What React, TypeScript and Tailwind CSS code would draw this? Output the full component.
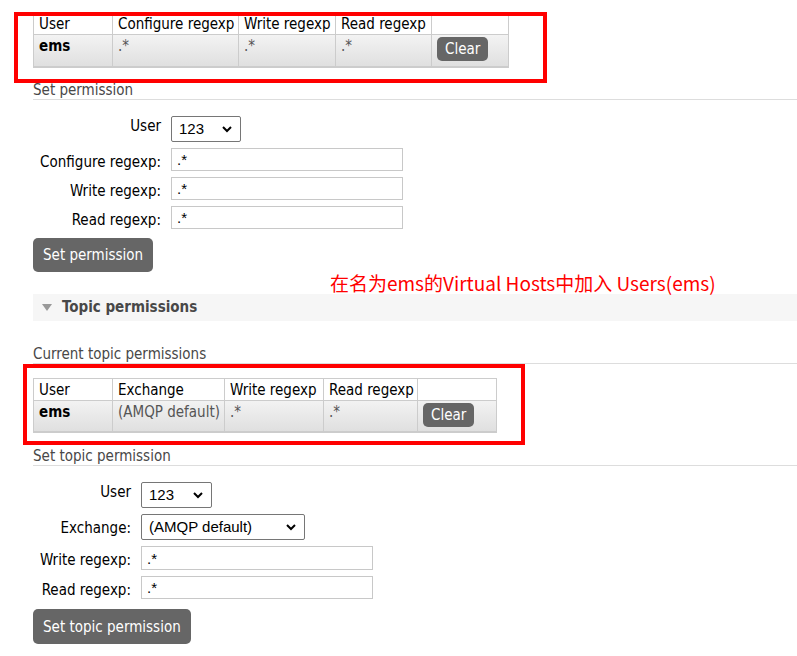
import React from "react";

const ui = "font-['DejaVu_Sans_Condensed','Noto_Sans',sans-serif] text-[15px] leading-[18px]";
const field = "font-['Liberation_Sans',Arial,sans-serif] text-[15px]";

const Chevron = () => (
  <svg
    className="pointer-events-none absolute right-[9px] top-[10px]"
    width="10"
    height="7"
    viewBox="0 0 10 7"
  >
    <polyline points="1,1 5,5 9,1" fill="none" stroke="#000" strokeWidth="2" />
  </svg>
);

const Select: React.FC<{ value: string; className: string }> = ({ value, className }) => (
  <div className={`relative ${className}`}>
    <select
      defaultValue={value}
      className={`${field} h-full w-full appearance-none rounded-[2px] border border-[#767676] bg-white pl-[7px] text-black outline-none`}
    >
      <option value={value}>{value}</option>
    </select>
    <Chevron />
  </div>
);

const TextInput: React.FC<{ className: string }> = ({ className }) => (
  <input
    type="text"
    defaultValue=".*"
    className={`${field} ${className} border border-[#c8c8c8] bg-white px-[5px] text-black outline-none`}
  />
);

const ClearButton = () => (
  <button className="h-[24px] rounded-[5px] bg-[#666] px-[8px] leading-[24px] text-white">
    Clear
  </button>
);

const th = "whitespace-nowrap border border-[#ccc] px-[5px] pt-[2px] pb-[1px] text-left font-normal text-black";
const td = "whitespace-nowrap border border-[#ccc] px-[5px] pt-[2px] pb-[2px] align-top text-[#555]";

export default function App() {
  return (
    <div className={`${ui} relative min-h-[656px] w-[797px] overflow-hidden bg-white pl-[33px] pt-[12px] text-black`}>
      {/* current permissions */}
      <div className="relative w-[475px]">
        <table className="w-[475px] table-fixed border-collapse border-b-2 border-[#ccc]">
          <colgroup>
            <col className="w-[79px]" />
            <col className="w-[126px]" />
            <col className="w-[97px]" />
            <col className="w-[96px]" />
            <col className="w-[77px]" />
          </colgroup>
          <thead>
            <tr className="bg-white">
              <th className={th}>User</th>
              <th className={th}>Configure regexp</th>
              <th className={th}>Write regexp</th>
              <th className={th}>Read regexp</th>
              <th className={th}></th>
            </tr>
          </thead>
          <tbody>
            <tr className="h-[32px] bg-linear-to-b from-[#f3f3f3] to-[#dfdfdf]">
              <td className={`${td} font-bold text-black`}>ems</td>
              <td className={td}>.*</td>
              <td className={td}>.*</td>
              <td className={td}>.*</td>
              <td className={td}>
                <ClearButton />
              </td>
            </tr>
          </tbody>
        </table>
        <div className="pointer-events-none absolute left-[-19px] top-[0px] h-[71px] w-[533px] border-4 border-[#ff0000]" />
      </div>

      <h3 className="mt-[13px] border-b border-[#ddd] text-[#484848]">Set permission</h3>

      <div className="mt-[16px] grid grid-cols-[138px_232px] gap-y-[6px]">
        <label className="pr-[10px] pt-[1px] text-right">User</label>
        <Select value="123" className="h-[26px] w-[70px]" />
        <label className="pr-[10px] pt-[5px] text-right">Configure regexp:</label>
        <TextInput className="h-[23px] w-[232px]" />
        <label className="pr-[10px] pt-[5px] text-right">Write regexp:</label>
        <TextInput className="h-[23px] w-[232px]" />
        <label className="pr-[10px] pt-[5px] text-right">Read regexp:</label>
        <TextInput className="h-[23px] w-[232px]" />
      </div>

      <button className="mt-[9px] h-[34px] rounded-[5px] bg-[#666] px-[10px] text-white">
        Set permission
      </button>

      <div className="pointer-events-none absolute left-[330px] top-[271px] whitespace-nowrap font-['Noto_Sans_CJK_SC',sans-serif] text-[19px] leading-[24px] text-[#ff0000]">
        在名为ems的Virtual Hosts中加入 Users(ems)
      </div>

      {/* topic permissions */}
      <div className="mt-[22px] flex h-[27px] items-center gap-[10px] bg-[#f6f6f6] pl-[9px]">
        <svg width="10" height="7" viewBox="0 0 10 7">
          <polygon points="0,0 10,0 5,7" fill="#999" />
        </svg>
        <span className="font-bold text-[#484848]">Topic permissions</span>
      </div>

      <h3 className="mt-[24px] border-b border-[#ddd] text-[#484848]">Current topic permissions</h3>

      <div className="relative mt-[14px] w-[463px]">
        <table className="w-[463px] table-fixed border-collapse border-b-2 border-[#ccc]">
          <colgroup>
            <col className="w-[79px]" />
            <col className="w-[112px]" />
            <col className="w-[99px]" />
            <col className="w-[94px]" />
            <col className="w-[79px]" />
          </colgroup>
          <thead>
            <tr className="bg-white">
              <th className={th}>User</th>
              <th className={th}>Exchange</th>
              <th className={th}>Write regexp</th>
              <th className={th}>Read regexp</th>
              <th className={th}></th>
            </tr>
          </thead>
          <tbody>
            <tr className="h-[32px] bg-linear-to-b from-[#f3f3f3] to-[#dfdfdf]">
              <td className={`${td} font-bold text-black`}>ems</td>
              <td className={td}>(AMQP default)</td>
              <td className={td}>.*</td>
              <td className={td}>.*</td>
              <td className={td}>
                <ClearButton />
              </td>
            </tr>
          </tbody>
        </table>
        <div className="pointer-events-none absolute left-[-10px] top-[-14px] h-[81px] w-[502px] border-4 border-[#ff0000]" />
      </div>

      <h3 className="mt-[14px] border-b border-[#ddd] text-[#484848]">Set topic permission</h3>

      <div className="mt-[16px] grid grid-cols-[108px_232px] gap-y-[6px]">
        <label className="pr-[10px] pt-[1px] text-right">User</label>
        <Select value="123" className="h-[26px] w-[71px]" />
        <label className="pr-[10px] pt-[5px] text-right">Exchange:</label>
        <Select value="(AMQP default)" className="h-[26px] w-[164px]" />
        <label className="pr-[10px] pt-[5px] text-right">Write regexp:</label>
        <TextInput className="h-[24px] w-[232px]" />
        <label className="pr-[10px] pt-[5px] text-right">Read regexp:</label>
        <TextInput className="h-[23px] w-[232px]" />
      </div>

      <button className="mt-[10px] h-[35px] rounded-[5px] bg-[#666] px-[10px] text-white">
        Set topic permission
      </button>
    </div>
  );
}
